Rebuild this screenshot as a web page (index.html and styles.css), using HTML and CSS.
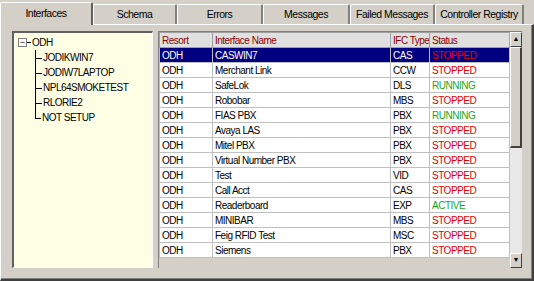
FILE: index.html
```html
<!DOCTYPE html>
<html lang="en">
    <head>
        <meta charset="utf-8">
        <title>Interfaces</title>
        <link rel="stylesheet" href="styles.css">
    </head>
    <body>
        <div class="tabs">
            <div class="tab active w1">Interfaces</div>
            <div class="tab w2">Schema</div>
            <div class="tab w3">Errors</div>
            <div class="tab w4">Messages</div>
            <div class="tab w5">Failed Messages</div>
            <div class="tab w6">Controller Registry</div>
        </div>
        <div class="panel">
            <div class="tree">
                <div class="root"><span class="box">&minus;</span><span class="dash"></span>ODH</div>
                <ul class="kids">
                    <li>JODIKWIN7</li>
                    <li>JODIW7LAPTOP</li>
                    <li>NPL64SMOKETEST</li>
                    <li>RLORIE2</li>
                    <li class="last">NOT SETUP</li>
                </ul>
            </div>
            <div class="grid">
                <table>
                    <colgroup>
                        <col class="c1"><col class="c2"><col class="c3"><col class="c4">
                    </colgroup>
                    <tr class="head"><th>Resort</th><th>Interface Name</th><th>IFC Type</th><th>Status</th></tr>
                    <tr class="sel"><td>ODH</td><td>CASWIN7</td><td>CAS</td><td class="stop">STOPPED</td></tr>
                    <tr><td>ODH</td><td>Merchant Link</td><td>CCW</td><td class="stop">STOPPED</td></tr>
                    <tr><td>ODH</td><td>SafeLok</td><td>DLS</td><td class="run">RUNNING</td></tr>
                    <tr><td>ODH</td><td>Robobar</td><td>MBS</td><td class="stop">STOPPED</td></tr>
                    <tr><td>ODH</td><td>FIAS PBX</td><td>PBX</td><td class="run">RUNNING</td></tr>
                    <tr><td>ODH</td><td>Avaya LAS</td><td>PBX</td><td class="stop">STOPPED</td></tr>
                    <tr><td>ODH</td><td>Mitel PBX</td><td>PBX</td><td class="stop">STOPPED</td></tr>
                    <tr><td>ODH</td><td>Virtual Number PBX</td><td>PBX</td><td class="stop">STOPPED</td></tr>
                    <tr><td>ODH</td><td>Test</td><td>VID</td><td class="stop">STOPPED</td></tr>
                    <tr><td>ODH</td><td>Call Acct</td><td>CAS</td><td class="stop">STOPPED</td></tr>
                    <tr><td>ODH</td><td>Readerboard</td><td>EXP</td><td class="run">ACTIVE</td></tr>
                    <tr><td>ODH</td><td>MINIBAR</td><td>MBS</td><td class="stop">STOPPED</td></tr>
                    <tr><td>ODH</td><td>Feig RFID Test</td><td>MSC</td><td class="stop">STOPPED</td></tr>
                    <tr><td>ODH</td><td>Siemens</td><td>PBX</td><td class="stop">STOPPED</td></tr>
                </table>
                <div class="scroll">
                    <div class="btn">&#9650;</div>
                    <div class="track"><div class="thumb"></div></div>
                    <div class="btn">&#9660;</div>
                </div>
            </div>
        </div>
    </body>
</html>
```

FILE: styles.css
```css
*{
    box-sizing: border-box;
}
body{
    margin: 0;
    width: 534px;
    height: 281px;
    overflow: hidden;
    background: #d4d0c8;
    font-family: "Liberation Sans", Arial, sans-serif;
    font-size: 10px;
    letter-spacing: -0.5px;
    color: #000;
}
.tabs{
    display: flex;
    height: 24px;
    align-items: flex-end;
    font-size: 10.5px;
}
.tab{
    height: 20px;
    line-height: 18px;
    text-align: center;
    white-space: nowrap;
    border-top: 1px solid #fff;
    border-left: 1px solid #fff;
    border-right: 2px solid #808080;
    border-radius: 2px 2px 0 0;
}
.tab.active{
    height: 23px;
    line-height: 21px;
    margin-bottom: -1px;
    position: relative;
    background: #d4d0c8;
    border-right-color: #606060;
}
.w1{ width: 93px; }
.w2{ width: 84px; }
.w3{ width: 86px; }
.w4{ width: 87px; }
.w5{ width: 85px; }
.w6{ width: 89px; }
.panel{
    height: 257px;
    display: flex;
    gap: 5px;
    padding: 6px 10px 11px 11px;
    border-top: 1px solid #fff;
    border-left: 1px solid #fff;
    border-right: 2px solid #404040;
    border-bottom: 2px solid #404040;
    box-shadow: inset -1px -1px 0 #808080;
}
.tree{
    width: 141px;
    background: #ffffe6;
    border-top: 2px solid #606060;
    border-left: 2px solid #606060;
    border-right: 1px solid #fff;
    border-bottom: 1px solid #fff;
    padding: 2px 0 0 4px;
}
.root{
    display: flex;
    align-items: center;
    height: 15px;
}
.box{
    width: 9px;
    height: 9px;
    border: 1px solid #808080;
    font-size: 9px;
    letter-spacing: 0;
    line-height: 6px;
    text-align: center;
    background: #fff;
}
.dash{
    width: 4px;
    border-top: 1px solid #000;
    margin-right: 1px;
}
.kids{
    list-style: none;
    margin: 0 0 0 17px;
    padding: 0;
}
.kids li{
    position: relative;
    height: 15px;
    line-height: 15px;
    padding-left: 7px;
    border-left: 1px solid #000;
}
.kids li::before{
    content: "";
    position: absolute;
    left: 0;
    top: 8px;
    width: 6px;
    border-top: 1px solid #000;
}
.kids li.last{
    border-left: none;
}
.kids li.last::after{
    content: "";
    position: absolute;
    left: 0;
    top: 0;
    height: 8px;
    border-left: 1px solid #000;
}
.grid{
    flex: 1;
    display: flex;
    overflow: hidden;
    background: #d4d0c8;
    border-top: 1px solid #808080;
    border-left: 1px solid #808080;
}
table{
    border-collapse: collapse;
    width: 350px;
    table-layout: fixed;
    align-self: flex-start;
}
.c1{ width: 53px; }
.c2{ width: 178px; }
.c3{ width: 39px; }
.c4{ width: 80px; }
th, td{
    height: 15px;
    padding: 0 0 0 2px;
    border: 1px solid #c0c0c0;
    text-align: left;
    font-weight: normal;
    white-space: nowrap;
    overflow: hidden;
}
td{
    background: #fff;
}
th{
    color: #8b0000;
    background: #e0e0e0;
    border-color: #a0a0a0;
}
.stop{ color: #e00000; }
.run{ color: #1aa81a; }
.sel td{
    background: #000080;
    color: #fff;
}
.sel td.stop{ color: #e00000; }
.scroll{
    width: 14px;
    display: flex;
    flex-direction: column;
    background: #e8e8e8;
}
.btn{
    height: 15px;
    font-size: 7px;
    letter-spacing: 0;
    line-height: 12px;
    text-align: center;
    background: #d4d0c8;
    border-top: 1px solid #fff;
    border-left: 1px solid #fff;
    border-right: 1px solid #404040;
    border-bottom: 1px solid #404040;
}
.track{
    flex: 1;
}
.thumb{
    height: 101px;
    background: #d4d0c8;
    border-top: 1px solid #fff;
    border-left: 1px solid #fff;
    border-right: 2px solid #404040;
    border-bottom: 2px solid #404040;
}
```
